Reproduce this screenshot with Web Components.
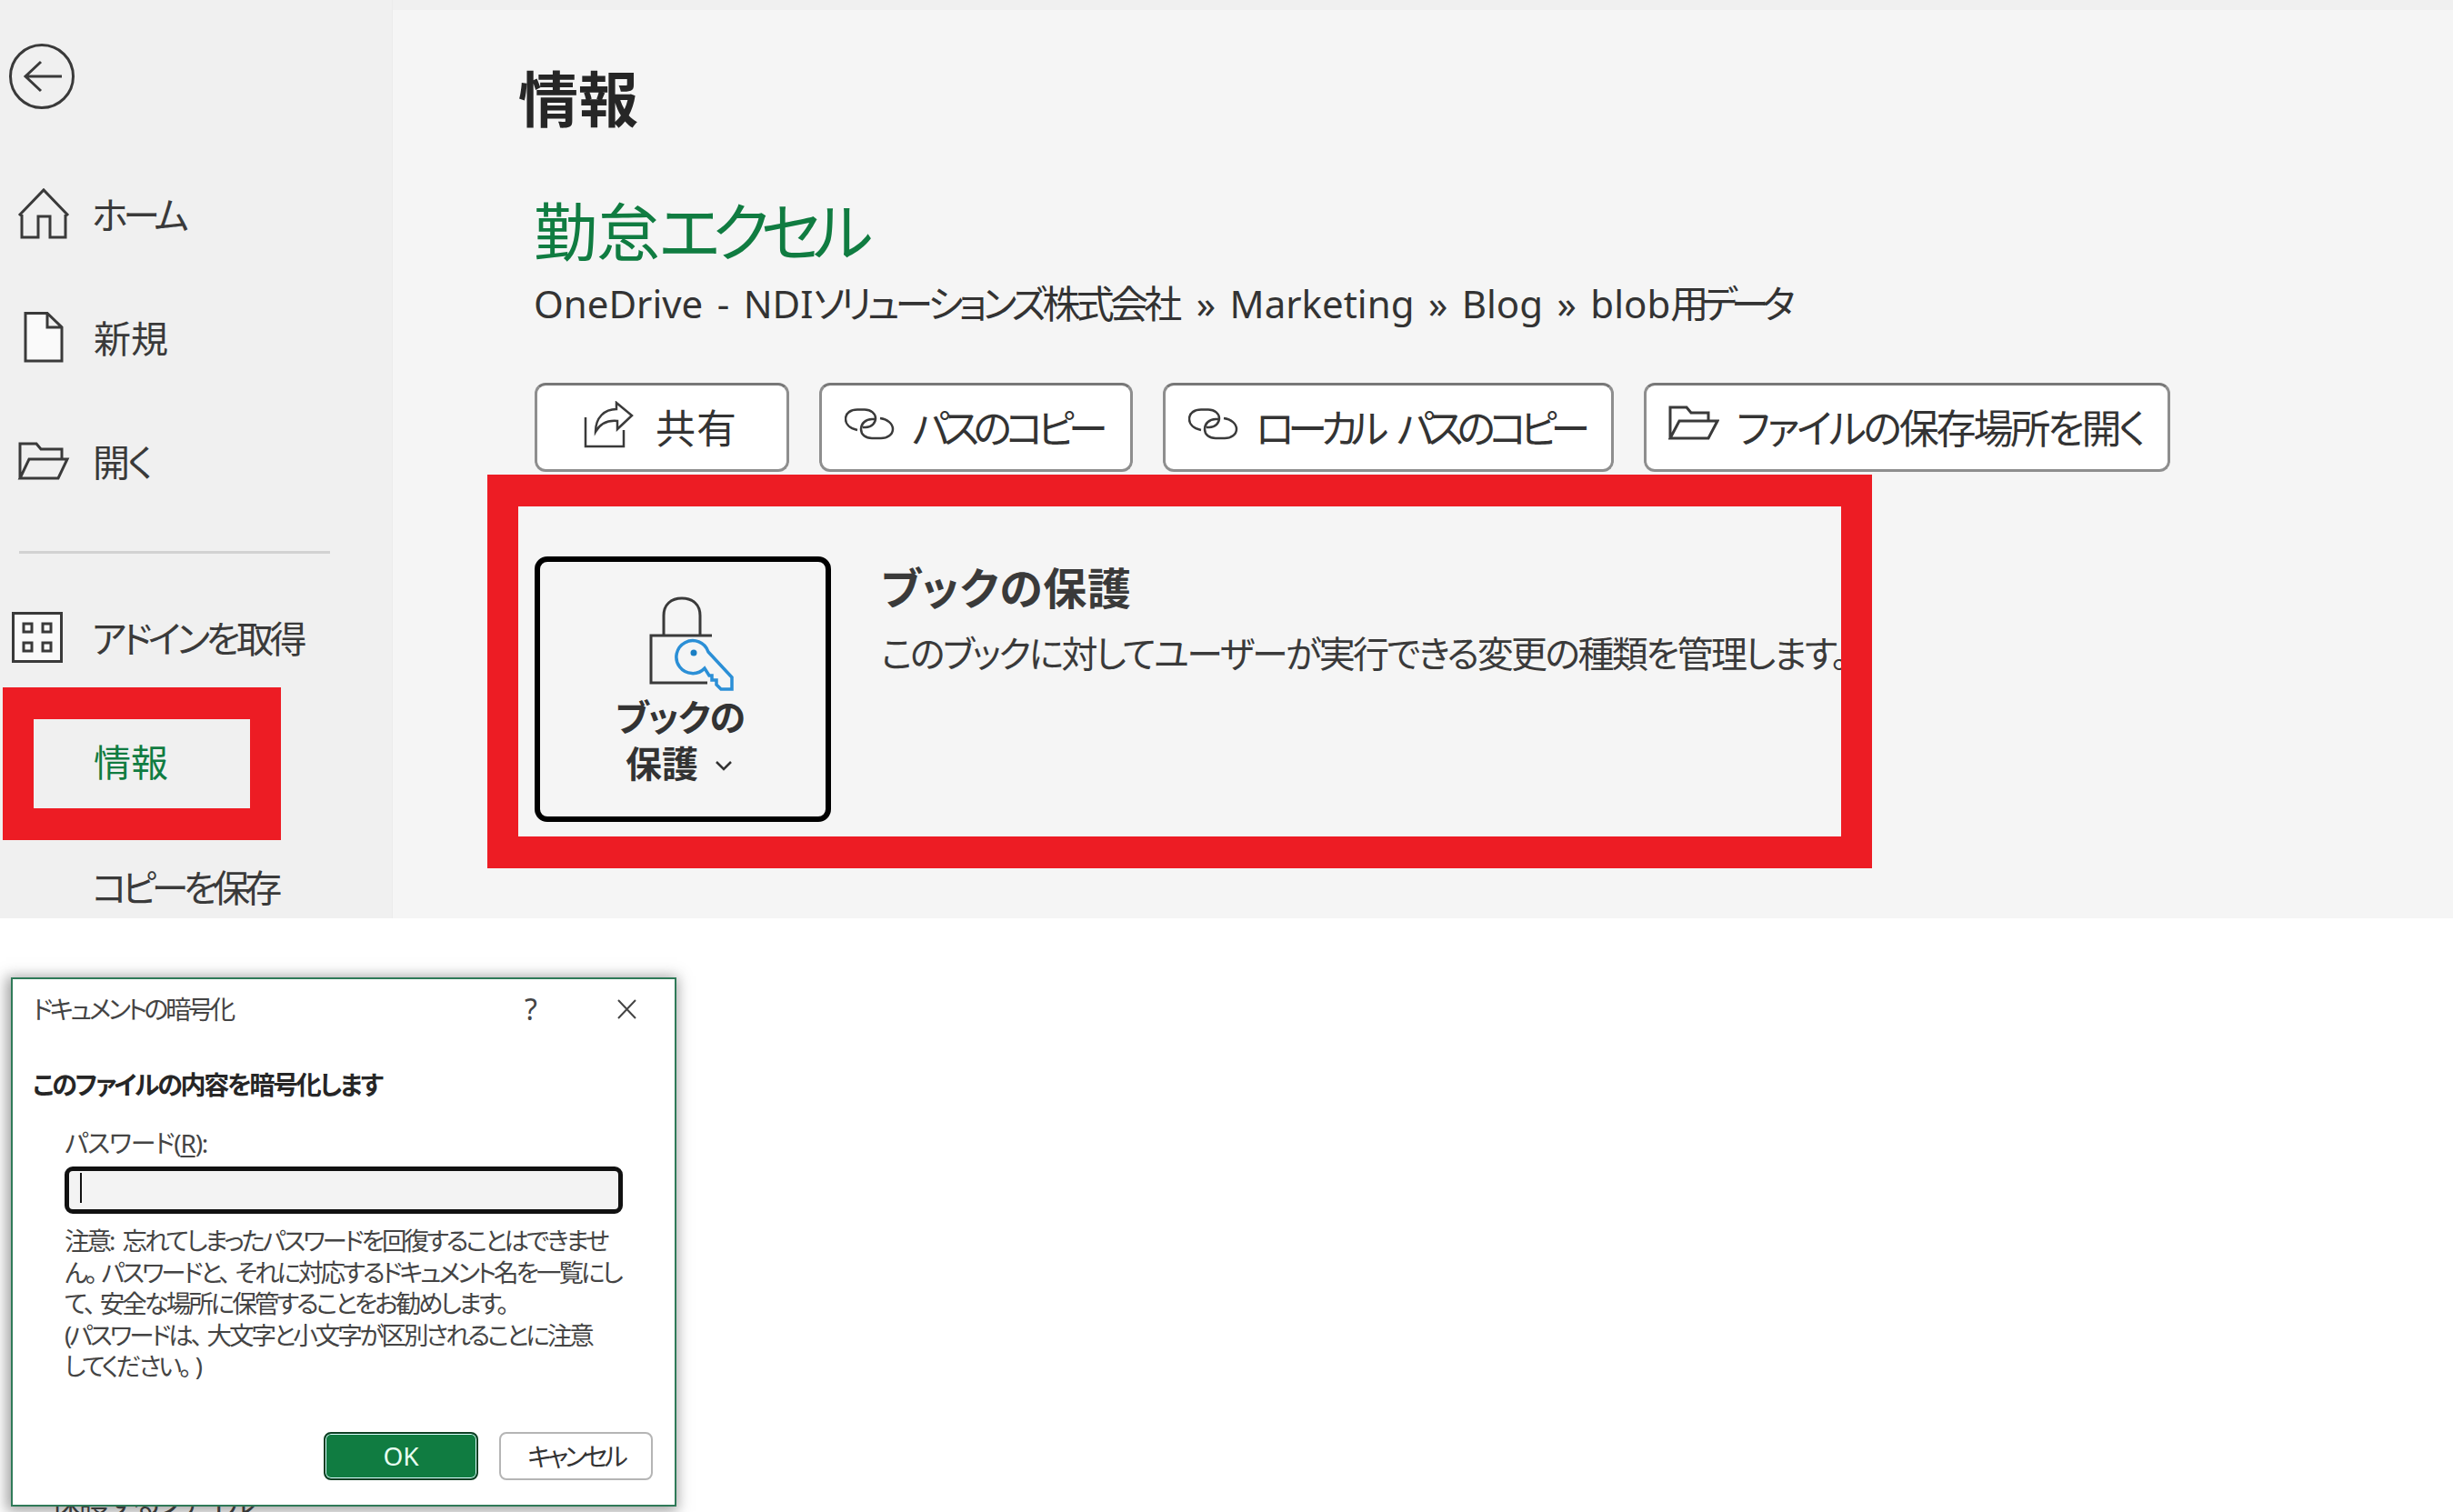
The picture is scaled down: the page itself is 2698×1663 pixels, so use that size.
<!DOCTYPE html>
<html lang="ja">
<head>
<meta charset="utf-8">
<title>情報</title>
<style>
html,body{margin:0;padding:0;background:#fff;overflow:hidden}
body{font-family:"Noto Sans","Noto Sans CJK JP",sans-serif;font-feature-settings:"palt";color:#333}
</style>
</head>
<body>
<x-app>
  <x-backstage>
    <x-sidebar>
      <x-nav-item style="--ls:-5.300px">ホーム
        <svg slot="icon" viewBox="0 0 103 136" width="103" height="136" fill="none" stroke="#3a3a3a" stroke-width="3"><path d="M24 68v25h18V70h13v23h17V68M21 69 48 41l27 28"/></svg>
      </x-nav-item>
      <x-nav-item style="--ls:0;--pl:2px">新規
        <svg slot="icon" viewBox="0 0 103 136" width="103" height="136" fill="#fafafa" stroke="#3a3a3a" stroke-width="3"><path d="M28 40.500H52L68 56V93H28ZM52 40.500V56H68"/></svg>
      </x-nav-item>
      <x-nav-item style="--ls:-2.500px;--pl:1px">開く
        <svg slot="icon" viewBox="0 0 103 136" width="103" height="136" fill="none" stroke="#3a3a3a" stroke-width="3"><path d="M22 86V48H40l5 6H68V65M22 86 32 65H74L64 86Z"/></svg>
      </x-nav-item>
      <x-divider></x-divider>
      <x-nav-item style="--ls:-4.400px;--pt:4px">アドインを取得
        <svg slot="icon" viewBox="0 0 103 136" width="103" height="136" fill="none" stroke="#3a3a3a" stroke-width="3"><rect x="14.500" y="42.500" width="53" height="53" fill="#fafafa"/><rect x="26" y="54" width="9" height="9"/><rect x="47" y="54" width="9" height="9"/><rect x="26" y="75" width="9" height="9"/><rect x="47" y="75" width="9" height="9"/></svg>
      </x-nav-item>
      <x-nav-item active style="--ls:0;--pl:2px">情報</x-nav-item>
      <x-nav-item style="--ls:-5.600px;--pt:4px">コピーを保存</x-nav-item>
    </x-sidebar>
    <x-info-pane></x-info-pane>
    <x-annotation style="left:3px;top:756px;width:306px;height:168px"></x-annotation>
    <x-annotation style="left:536px;top:522px;width:1523px;height:433px"></x-annotation>
  </x-backstage>
  <x-lower>
    <x-encrypt-dialog></x-encrypt-dialog>
  </x-lower>
</x-app>
<script>
function def(name, html){
  const t=document.createElement('template');t.innerHTML=html;
  customElements.define(name,class extends HTMLElement{
    constructor(){super();this.attachShadow({mode:'open'}).appendChild(t.content.cloneNode(true));}
  });
}
const LINK='<svg slot="icon" width="56" height="36" viewBox="0 0 56 36" fill="none" stroke="#3a3a3a" stroke-width="2.500"><path d="M14 24C5 22 1 17 1 12 1 5 7 1.500 14 1.500H22C29 1.500 34 6 34 11 34 16 30 21 23 21H20M39 11C47 12 53 17 53 23 53 29 47 33 40 33H30C23 33 18 29 18 23 18 17 23 12 30 12H33"/></svg>';
def('x-app',`<style>:host{display:block;width:2698px;height:1663px;overflow:hidden;position:relative}</style><slot></slot>`);
def('x-backstage',`<style>:host{display:flex;position:relative;height:1010px;overflow:hidden;background:#f0f0f0}</style><slot></slot>`);
def('x-annotation',`<style>:host{display:block;position:absolute;box-sizing:border-box;border:34px solid #ed1c24;border-top-width:35px;border-bottom-width:35px;pointer-events:none}</style>`);
def('x-sidebar',`<style>
:host{display:block;flex:0 0 432px;box-sizing:border-box;padding-top:48px;border-right:1px solid #ebebeb}
.back{display:block;margin:0 0 48px 8px}
</style>
<svg class="back" width="78" height="72" viewBox="0 0 78 72" fill="none" stroke="#3a3a3a" stroke-width="3"><circle cx="38" cy="36" r="34.500"/><path d="M20 36H60M37 20 20 36 37 52"/></svg>
<slot></slot>`);
def('x-divider',`<style>:host{display:block;height:3px;margin:30px 68px 23px 21px;background:#d2d2d2}</style>`);
def('x-nav-item',`<style>
:host{display:grid;grid-template-columns:101px 1fr;align-items:center;height:136px;font-size:41px;line-height:50px;color:#3a3a3a;letter-spacing:var(--ls,-.5px);white-space:nowrap}
:host([active]){color:#107c41;margin-top:2px}
::slotted(svg){display:block}
.i{width:101px;height:136px}
.l{padding-top:var(--pt,0);padding-left:var(--pl,0)}
</style><div class="i"><slot name="icon"></slot></div><div class="l"><slot></slot></div>`);
def('x-info-pane',`<style>
:host{display:block;flex:1;margin-top:11px;background:#f5f5f5;padding:64px 0 0 138px;color:#262626}
h1{margin:0;font-size:66px;line-height:66px;font-weight:700;color:#262626}
.body{margin-left:17px}
.name{margin-top:74px;font-size:70px;line-height:80px;color:#107c41;letter-spacing:-1px;white-space:nowrap}
.name span{letter-spacing:-9px}
.path{margin-top:14px;font-size:42px;line-height:50px;white-space:nowrap;color:#333;word-spacing:4.500px}
.path span{letter-spacing:-4.800px;margin-right:5px}
.path span.b{letter-spacing:-7.300px;margin-right:0}
.btns{display:flex;gap:33px;margin:62px 0 0 1px}
</style>
<h1>情報</h1>
<div class="body">
  <div class="name">勤怠<span>エクセル</span></div>
  <div class="path">OneDrive - NDI<span>ソリューションズ株式会社</span> » Marketing » Blog » blob<span class="b">用データ</span></div>
  <div class="btns">
    <x-action-button style="width:280px;--pad:50px;--ls:1px">
      <svg slot="icon" width="56" height="53" viewBox="0 0 56 53" fill="none" stroke="#3a3a3a" stroke-width="2.500"><path d="M3 18V50H45V32M37 2 54 16 38 31V22C27 21 19 25 14 34 14 18 24 9 37 9Z"/></svg>共有
    </x-action-button>
    <x-action-button style="width:345px;--pad:25px;--ls:-6.800px;--gap:18px">${LINK}パスのコピー</x-action-button>
    <x-action-button style="width:496px;--pad:25px;--ls:-7.300px;--ws:12px;--gap:18px">${LINK}ローカル パスのコピー</x-action-button>
    <x-action-button style="width:579px;--pad:24px;--ls:-3.200px;--gap:19px;--up:-5px">
      <svg slot="icon" width="56" height="38" viewBox="0 0 56 38" fill="none" stroke="#3a3a3a" stroke-width="3"><path d="M2 36V2H20L25 8H44V17M2 36 12 17H54L44 36Z"/></svg>ファイルの保存場所を開く
    </x-action-button>
  </div>
  <x-protect-card></x-protect-card>
</div>`);
def('x-action-button',`<style>
:host{display:flex;align-items:center;box-sizing:border-box;height:98px;padding-left:var(--pad);background:#fff;border:3px solid #8e8e8e;border-top-color:#777;border-radius:12px;font-size:44px;line-height:50px;color:#333;white-space:nowrap;letter-spacing:var(--ls,-.5px);word-spacing:var(--ws,0)}
::slotted(svg){flex:none;margin-right:var(--gap,24px);transform:translateY(var(--up,-3px))}
.l{padding-top:1px}
</style><slot name="icon"></slot><div class="l"><slot></slot></div>`);
def('x-protect-card',`<style>
:host{display:flex;gap:55px;margin:93px 0 0 1px;white-space:nowrap}
.btn{box-sizing:border-box;width:326px;height:292px;border:6px solid #000;border-radius:14px;background:#f5f5f5;display:flex;flex-direction:column;align-items:center;padding-top:35px;font-size:40px;line-height:51px;font-weight:700;color:#333;text-align:center}
.btn svg.lock{display:block;margin-left:18px}
.btn span{display:block;margin-left:-8px}
.btn span.a{letter-spacing:-1px;margin-left:-6px}
.chev{margin-left:18px;vertical-align:7px}
.txt{padding-top:5px}
h2{margin:0;font-size:48px;line-height:60px;font-weight:700;color:#3a3a3a;letter-spacing:.8px}
p{margin:17px 0 0;font-size:40px;line-height:50px;color:#3a3a3a;letter-spacing:-2.600px}
</style>
<div class="btn">
  <svg class="lock" width="96" height="110" viewBox="0 0 96 110" fill="none">
    <path d="M18 46V24C18 12 26 5 38 5 50 5 58 12 58 24V46M71 46H4V98H66" stroke="#3a3a3a" stroke-width="3"/>
    <path d="M67 64 93 92V105H81L76 100V95H71V90H68L63 82A18 18 0 1 1 67 64Z" fill="#f5f5f5" stroke="#2b8fd6" stroke-width="3.500"/>
    <circle cx="51" cy="65" r="3.500" fill="#1a7fc4"/>
  </svg>
  <span class="a">ブックの</span>
  <span>保護<svg class="chev" width="20" height="12" viewBox="0 0 20 12" fill="none" stroke="#333" stroke-width="2.500"><path d="M2 2 10 10 18 2"/></svg></span>
</div>
<div class="txt">
  <h2>ブックの保護</h2>
  <p>このブックに対してユーザーが実行できる変更の種類を管理します。</p>
</div>`);
def('x-lower',`<style>
:host{display:block;position:relative;height:653px;background:#fff;padding:65px 0 0 12px;box-sizing:border-box}
.under{position:absolute;left:56px;top:622px;font-size:34px;line-height:40px;color:#333;white-space:nowrap;letter-spacing:-3px}
</style><div class="under">保護するファイル</div><slot></slot>`);
def('x-encrypt-dialog',`<style>
:host{display:block;position:relative;box-sizing:border-box;width:732px;height:582px;background:#fff;border:2px solid #2f7a58;box-shadow:-2px 2px 14px 3px rgba(70,70,70,.5);padding-left:22px;color:#3a3a3a;font-size:27px}
.bar{display:flex;align-items:center;height:66px;font-size:28px;line-height:66px;color:#444}
.t{flex:1;letter-spacing:-3.400px}
.q{width:30px;text-align:center;margin-right:80px;font-size:32px;font-family:"Noto Sans",sans-serif}
.x{display:block;margin-right:42px}
.hd{margin-top:30px;font-size:28px;line-height:40px;font-weight:700;color:#262626;letter-spacing:-2.300px}
.in{margin-left:35px}
.lb{margin-top:24px;line-height:40px;font-size:28px;color:#444;letter-spacing:-1.200px;padding-bottom:2px}
u{text-underline-offset:3px}
.inp{box-sizing:border-box;width:614px;height:52px;margin-top:4px;border:5px solid #111;border-radius:9px;background:#f3f3f3;padding:2px 0 0 12px}
.caret{width:2px;height:33px;background:#111}
.note{margin-top:13px;line-height:34.500px;white-space:nowrap;color:#444;font-size:27.500px;letter-spacing:-3px;word-spacing:6px;padding-bottom:2px}
.note i{font-style:normal;margin-right:7px}
.row{display:flex;justify-content:flex-end;gap:23px;margin:52px 24px 0 0}
.b{box-sizing:border-box;height:53px;display:flex;align-items:center;justify-content:center;font-size:28px;border-radius:8px}
.ok{width:170px;background:#107c41;color:#e8fff2;border:2px solid #0c3f22;box-shadow:inset 0 0 0 1px #dff;font-family:"Noto Sans",sans-serif}
.cc{width:169px;background:#fff;border:2px solid #b5b5b5;color:#333;letter-spacing:-4px}
</style>
<div class="bar"><div class="t">ドキュメントの暗号化</div><div class="q">?</div><svg class="x" width="21" height="22" viewBox="0 0 21 22" fill="none" stroke="#444" stroke-width="2"><path d="M1 1 20 21M20 1 1 21"/></svg></div>
<div class="hd">このファイルの内容を暗号化します</div>
<div class="in">
  <div class="lb">パスワード(<u>R</u>):</div>
  <div class="inp"><div class="caret"></div></div>
  <div class="note">注意: 忘れてしまったパスワードを回復することはできませ<br>ん<i>。</i>パスワードと<i>、</i>それに対応するドキュメント名を一覧にし<br>て<i>、</i>安全な場所に保管することをお勧めします<i>。</i><br>(パスワードは<i>、</i>大文字と小文字が区別されることに注意<br>してください<i>。</i>)</div>
</div>
<div class="row"><div class="b ok">OK</div><div class="b cc">キャンセル</div></div>`);
</script>
</body>
</html>
